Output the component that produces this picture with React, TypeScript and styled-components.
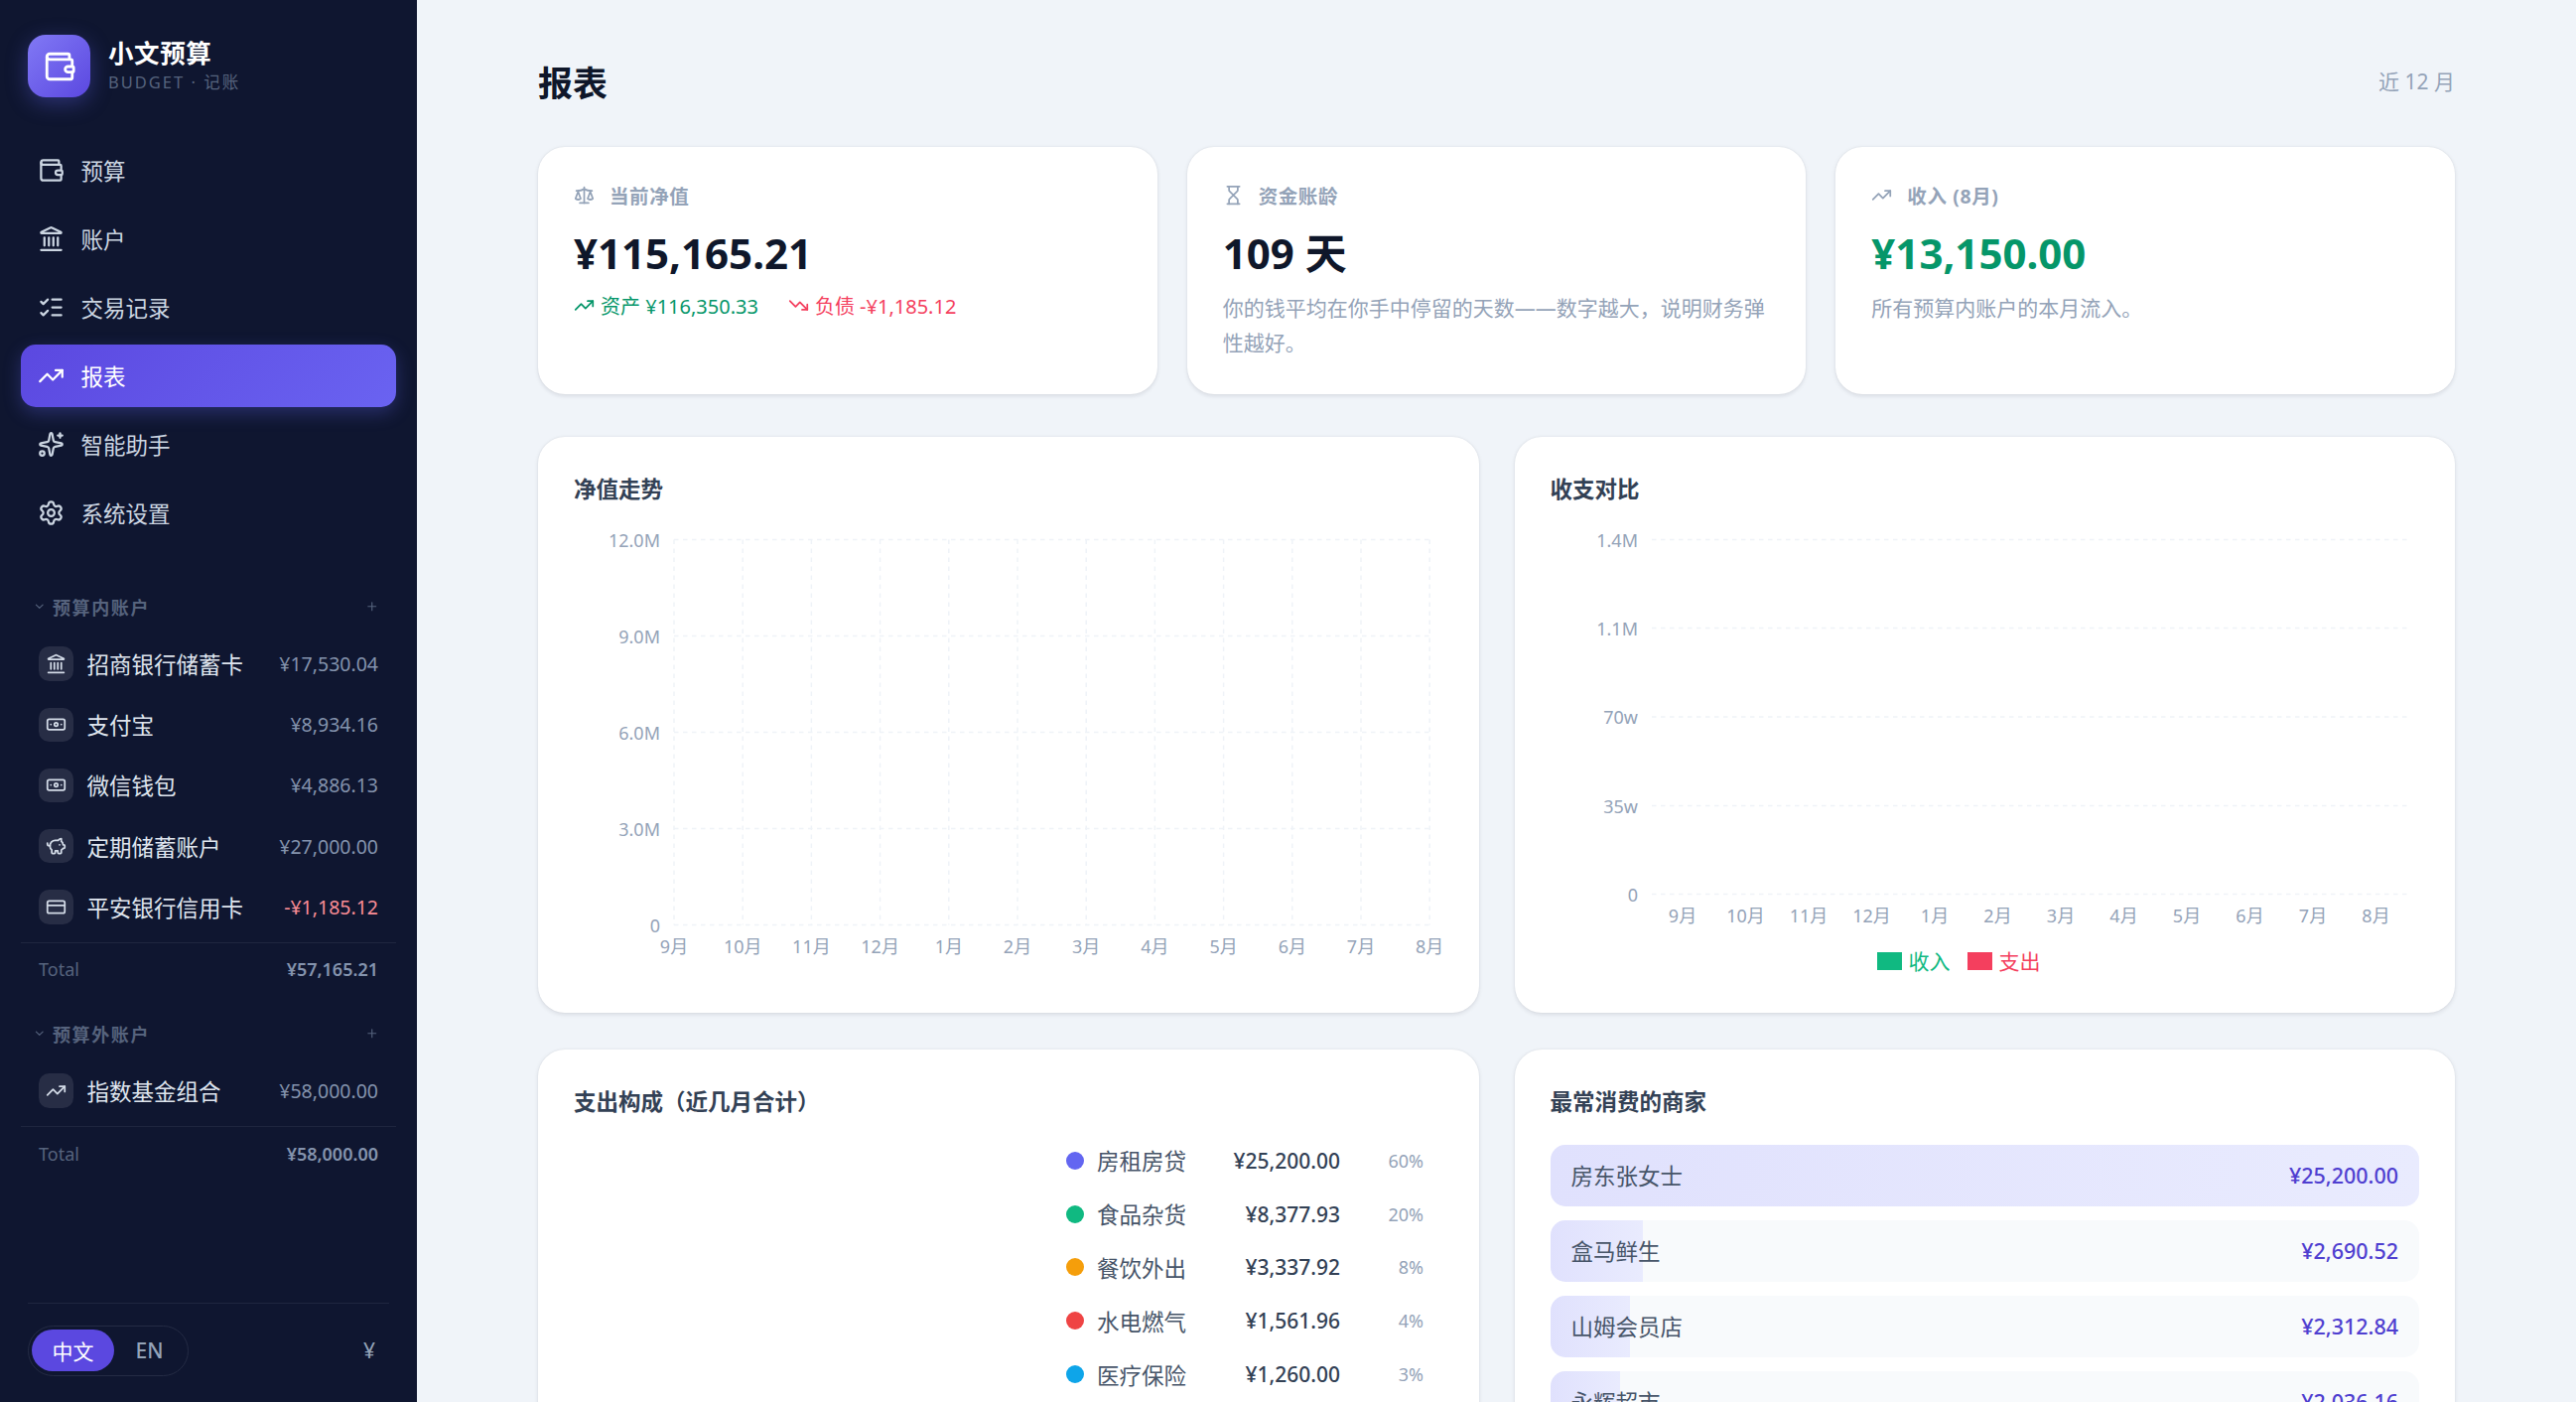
import React from "react"
import styled, { createGlobalStyle } from "styled-components"
import {
  Banknote,
  ChevronDown,
  CreditCard,
  Hourglass,
  Landmark,
  ListChecks,
  LucideIcon,
  PiggyBank,
  Plus,
  Scale,
  Settings,
  Sparkles,
  TrendingDown,
  TrendingUp,
  Wallet,
} from "lucide-react"

const GlobalStyle = createGlobalStyle`
  * { box-sizing: border-box; }
  html, body { margin: 0; height: 100%; }
  body {
    font-family: "Noto Sans", "Noto Sans CJK SC", sans-serif;
    background: #f0f4f9;
    overflow: hidden;
  }
`

const Shell = styled.div`
  display: flex;
  height: 100vh;
  overflow: hidden;
`

const Sidebar = styled.aside`
  flex: 0 0 420px;
  display: flex;
  flex-direction: column;
  background: #0f1630;
`

const Brand = styled.div`
  display: flex;
  align-items: center;
  gap: 18px;
  padding: 35px 28px 42px;
`

const BrandLogo = styled.div`
  width: 63px;
  height: 63px;
  border-radius: 18px;
  display: flex;
  align-items: center;
  justify-content: center;
  color: #fff;
  background: linear-gradient(135deg, #8179f5, #5b48e0);
  box-shadow: 0 6px 21px rgba(99, 102, 241, 0.35);
`

const BrandName = styled.div`
  font-size: 25.5px;
  line-height: 32px;
  font-weight: 700;
  letter-spacing: 0.6px;
  color: #fff;
  margin-top: -3px;
  margin-bottom: 3px;
`

const BrandSub = styled.div`
  font-size: 16.5px;
  line-height: 22px;
  letter-spacing: 2px;
  color: #56637d;
`

const Nav = styled.nav`
  display: flex;
  flex-direction: column;
  gap: 6px;
  padding: 0 21px;
`

const NavItem = styled.div<{ $active?: boolean }>`
  height: 63px;
  display: flex;
  align-items: center;
  gap: 17px;
  padding: 0 16.5px;
  border-radius: 15px;
  font-size: 22.5px;
  color: ${p => (p.$active ? "#fff" : "#cbd5e1")};
  background: ${p =>
    p.$active ? "linear-gradient(135deg, #5b48e0, #6a63f1)" : "transparent"};
  box-shadow: ${p =>
    p.$active ? "0 6px 18px rgba(99, 102, 241, 0.3)" : "none"};
`

const Group = styled.section`
  padding: 0 21px;
  margin-top: 23px;

  &:first-of-type {
    margin-top: 48px;
  }
`

const GroupHead = styled.div`
  height: 30px;
  display: flex;
  align-items: center;
  padding: 0 18px 0 12px;
  margin-bottom: 12px;
  color: #56637d;
`

const GroupTitle = styled.span`
  flex: 1;
  margin-left: 6.5px;
  font-size: 18px;
  font-weight: 700;
  letter-spacing: 1.6px;
`

const AccountRow = styled.div`
  height: 61.2px;
  display: flex;
  align-items: center;
  padding: 0 18px;
`

const AccountIcon = styled.div`
  width: 34.5px;
  height: 34.5px;
  flex: none;
  border-radius: 10.5px;
  display: flex;
  align-items: center;
  justify-content: center;
  background: #272d45;
  color: #d3dbe7;
`

const AccountName = styled.span`
  flex: 1;
  margin-left: 14px;
  font-size: 22.5px;
  color: #dfe5ee;
  white-space: nowrap;
`

const AccountAmount = styled.span<{ $negative?: boolean }>`
  font-size: 19.5px;
  color: ${p => (p.$negative ? "#fb8d96" : "#8493ad")};
`

const TotalRow = styled.div`
  margin-top: 5px;
  height: 54px;
  display: flex;
  align-items: center;
  justify-content: space-between;
  padding: 0 18px;
  border-top: 1.5px solid #1f263f;
  font-size: 18px;
`

const TotalLabel = styled.span`
  color: #56637d;
`

const TotalValue = styled.span`
  font-weight: 600;
  color: #8493ad;
`

const SideFooter = styled.div`
  margin: auto 28px 0;
  height: 100px;
  display: flex;
  align-items: center;
  justify-content: space-between;
  padding: 0 14px 5px 0;
  border-top: 1.5px solid #1f263f;
`

const LangSwitch = styled.div`
  width: 162px;
  height: 51px;
  display: flex;
  align-items: center;
  padding: 3px;
  border: 1.5px solid #242b44;
  border-radius: 26px;
`

const LangOption = styled.span<{ $active?: boolean }>`
  width: ${p => (p.$active ? "84px" : "72px")};
  height: 42px;
  display: flex;
  align-items: center;
  justify-content: center;
  border-radius: 21px;
  font-size: 21px;
  font-weight: ${p => (p.$active ? 400 : 500)};
  color: ${p => (p.$active ? "#fff" : "#94a3b8")};
  background: ${p => (p.$active ? "#5b48e0" : "transparent")};
`

const Currency = styled.span`
  font-size: 21px;
  color: #94a3b8;
`

const Main = styled.main`
  flex: 1;
  min-width: 0;
  overflow: hidden;
  padding-top: 54px;
`

const Content = styled.div`
  width: 1931px;
  margin: 0 auto;
`

const PageHead = styled.header`
  height: 54px;
  margin-bottom: 40px;
  display: flex;
  align-items: center;
  justify-content: space-between;
`

const PageTitle = styled.h1`
  margin: 0;
  font-size: 35px;
  font-weight: 700;
  color: #0f172a;
`

const PageRange = styled.span`
  font-size: 21px;
  color: #94a3b8;
`

const StatGrid = styled.div`
  display: grid;
  grid-template-columns: repeat(3, 1fr);
  gap: 30px;
  margin-bottom: 43.5px;
`

const Card = styled.div`
  background: #fff;
  border-radius: 27px;
  padding: 36px;
  box-shadow: 0 1.5px 4.5px rgba(15, 23, 42, 0.1), 0 0 1.5px rgba(15, 23, 42, 0.08);
`

const StatCard = styled(Card)`
  height: 248.5px;
  padding-top: 33px;
`

const StatLabel = styled.div`
  height: 30px;
  display: flex;
  align-items: center;
  gap: 15px;
  font-size: 19.5px;
  font-weight: 700;
  letter-spacing: 0.6px;
  color: #94a3b8;
`

const StatValue = styled.div<{ $color?: string }>`
  margin-top: 17px;
  height: 54px;
  line-height: 54px;
  font-size: 42px;
  font-weight: 700;
  color: ${p => p.$color || "#0f172a"};
`

const StatDesc = styled.div`
  margin-top: 11px;
  font-size: 21px;
  line-height: 35px;
  color: #94a3b8;
`

const SplitRow = styled.div`
  margin-top: 8px;
  height: 35px;
  display: flex;
  align-items: center;
  gap: 30px;
`

const Trend = styled.span<{ $color: string }>`
  display: inline-flex;
  align-items: center;
  gap: 6px;
  font-size: 20px;
  color: ${p => p.$color};
`

const PanelGrid = styled.div`
  display: grid;
  grid-template-columns: 1fr 1fr;
  gap: 36px;
`

const ChartCard = styled(Card)`
  height: 580px;
  padding-top: 34.5px;
`

const PanelTitle = styled.h2`
  margin: 0;
  height: 37px;
  line-height: 36px;
  font-size: 22.5px;
  font-weight: 700;
  color: #334155;
`

const ChartSvg = styled.svg`
  display: block;

  line {
    stroke: #eff3f8;
    stroke-width: 1.5;
    stroke-dasharray: 4.5 4.5;
  }

  text {
    fill: #94a3b8;
    font-size: 18px;
    font-family: "Noto Sans", "Noto Sans CJK SC", sans-serif;
    dominant-baseline: central;
  }
`

const ChartLegend = styled.div`
  display: flex;
  align-items: center;
  gap: 17px;
  margin-left: 329px;
  margin-top: 14px;
`

const LegendItem = styled.span<{ $color: string }>`
  display: inline-flex;
  align-items: center;
  gap: 7px;
  font-size: 21px;
  color: ${p => p.$color};

  &::before {
    content: "";
    width: 25px;
    height: 18px;
    margin-top: 3px;
    background: ${p => p.$color};
  }
`

const BottomGrid = styled(PanelGrid)`
  margin-top: 37px;
`

const TallCard = styled(Card)`
  height: 700px;
  padding-top: 34.5px;
`

const BreakdownList = styled.div`
  width: 360px;
  margin: 13.5px 0 0 496px;
`

const BreakdownRow = styled.div`
  height: 53.8px;
  display: grid;
  grid-template-columns: 18px 1fr auto 84px;
  align-items: center;
  column-gap: 0;
`

const Dot = styled.span<{ $color: string }>`
  width: 18px;
  height: 18px;
  border-radius: 50%;
  background: ${p => p.$color};
`

const BreakdownName = styled.span`
  margin-left: 13px;
  font-size: 22.5px;
  color: #475569;
`

const BreakdownAmount = styled.span`
  font-size: 21px;
  font-weight: 500;
  color: #334155;
`

const BreakdownPct = styled.span`
  text-align: right;
  font-size: 18px;
  color: #94a3b8;
`

const MerchantList = styled.div`
  display: flex;
  flex-direction: column;
  gap: 14px;
  margin-top: 24px;
`

const MerchantRow = styled.div`
  position: relative;
  height: 62px;
  display: flex;
  align-items: center;
  justify-content: space-between;
  padding: 0 21px;
  border-radius: 15px;
  overflow: hidden;
  background: #f8fafc;
`

const MerchantFill = styled.div`
  position: absolute;
  left: 0;
  top: 0;
  bottom: 0;
  background: linear-gradient(90deg, #e0e1fd, #e9ebfe);
`

const MerchantName = styled.span`
  position: relative;
  font-size: 22.5px;
  color: #475569;
`

const MerchantAmount = styled.span`
  position: relative;
  font-size: 21.5px;
  font-weight: 500;
  color: #4f3fd0;
`

const navItems: { icon: LucideIcon; label: string; active?: boolean }[] = [
  { icon: Wallet, label: "预算" },
  { icon: Landmark, label: "账户" },
  { icon: ListChecks, label: "交易记录" },
  { icon: TrendingUp, label: "报表", active: true },
  { icon: Sparkles, label: "智能助手" },
  { icon: Settings, label: "系统设置" },
]

const onBudget: { icon: LucideIcon; name: string; amount: string }[] = [
  { icon: Landmark, name: "招商银行储蓄卡", amount: "¥17,530.04" },
  { icon: Banknote, name: "支付宝", amount: "¥8,934.16" },
  { icon: Banknote, name: "微信钱包", amount: "¥4,886.13" },
  { icon: PiggyBank, name: "定期储蓄账户", amount: "¥27,000.00" },
  { icon: CreditCard, name: "平安银行信用卡", amount: "-¥1,185.12" },
]

const months = ["9月", "10月", "11月", "12月", "1月", "2月", "3月", "4月", "5月", "6月", "7月", "8月"]

const breakdown = [
  { color: "#6366f1", name: "房租房贷", amount: "¥25,200.00", pct: "60%" },
  { color: "#10b981", name: "食品杂货", amount: "¥8,377.93", pct: "20%" },
  { color: "#f59e0b", name: "餐饮外出", amount: "¥3,337.92", pct: "8%" },
  { color: "#ef4444", name: "水电燃气", amount: "¥1,561.96", pct: "4%" },
  { color: "#0ea5e9", name: "医疗保险", amount: "¥1,260.00", pct: "3%" },
]

const merchants = [
  { name: "房东张女士", amount: "¥25,200.00", value: 25200 },
  { name: "盒马鲜生", amount: "¥2,690.52", value: 2690.52 },
  { name: "山姆会员店", amount: "¥2,312.84", value: 2312.84 },
  { name: "永辉超市", amount: "¥2,036.16", value: 2036.16 },
]

const AccountLine: React.FC<{ icon: LucideIcon; name: string; amount: string }> = ({
  icon: Icon,
  name,
  amount,
}) => (
  <AccountRow>
    <AccountIcon>
      <Icon size={21} />
    </AccountIcon>
    <AccountName>{name}</AccountName>
    <AccountAmount $negative={amount.startsWith("-")}>{amount}</AccountAmount>
  </AccountRow>
)

const GroupHeader: React.FC<{ title: string }> = ({ title }) => (
  <GroupHead>
    <ChevronDown size={13.5} />
    <GroupTitle>{title}</GroupTitle>
    <Plus size={13.5} />
  </GroupHead>
)

const NetWorthChart: React.FC = () => {
  const ys = [
    { y: 31.5, label: "12.0M" },
    { y: 128.5, label: "9.0M" },
    { y: 225.5, label: "6.0M" },
    { y: 322.5, label: "3.0M" },
    { y: 419.5, label: "0" },
  ]
  return (
    <ChartSvg width={875} height={472}>
      {ys.map(t => (
        <g key={t.label}>
          <line x1={101} x2={862} y1={t.y} y2={t.y} />
          <text x={87} y={t.y} textAnchor="end">
            {t.label}
          </text>
        </g>
      ))}
      {months.map((m, i) => (
        <g key={m}>
          <line x1={101 + i * 69.2} x2={101 + i * 69.2} y1={31.5} y2={419.5} />
          <text x={101 + i * 69.2} y={440.5} textAnchor="middle">
            {m}
          </text>
        </g>
      ))}
    </ChartSvg>
  )
}

const CashFlowChart: React.FC = () => {
  const ys = [
    { y: 31.5, label: "1.4M" },
    { y: 120.5, label: "1.1M" },
    { y: 210, label: "70w" },
    { y: 299.5, label: "35w" },
    { y: 388.5, label: "0" },
  ]
  return (
    <ChartSvg width={875} height={426}>
      {ys.map(t => (
        <g key={t.label}>
          <line x1={102} x2={864} y1={t.y} y2={t.y} />
          <text x={88} y={t.y} textAnchor="end">
            {t.label}
          </text>
        </g>
      ))}
      {months.map((m, i) => (
        <text key={m} x={133 + i * 63.5} y={410} textAnchor="middle">
          {m}
        </text>
      ))}
    </ChartSvg>
  )
}

export default function App() {
  return (
    <Shell>
      <GlobalStyle />
      <Sidebar>
        <Brand>
          <BrandLogo>
            <Wallet size={34} />
          </BrandLogo>
          <div>
            <BrandName>小文预算</BrandName>
            <BrandSub>BUDGET · 记账</BrandSub>
          </div>
        </Brand>
        <Nav>
          {navItems.map(({ icon: Icon, label, active }) => (
            <NavItem key={label} $active={active}>
              <Icon size={27} />
              {label}
            </NavItem>
          ))}
        </Nav>
        <Group>
          <GroupHeader title="预算内账户" />
          {onBudget.map(a => (
            <AccountLine key={a.name} {...a} />
          ))}
          <TotalRow>
            <TotalLabel>Total</TotalLabel>
            <TotalValue>¥57,165.21</TotalValue>
          </TotalRow>
        </Group>
        <Group>
          <GroupHeader title="预算外账户" />
          <AccountLine icon={TrendingUp} name="指数基金组合" amount="¥58,000.00" />
          <TotalRow>
            <TotalLabel>Total</TotalLabel>
            <TotalValue>¥58,000.00</TotalValue>
          </TotalRow>
        </Group>
        <SideFooter>
          <LangSwitch>
            <LangOption $active>中文</LangOption>
            <LangOption>EN</LangOption>
          </LangSwitch>
          <Currency>¥</Currency>
        </SideFooter>
      </Sidebar>
      <Main>
        <Content>
          <PageHead>
            <PageTitle>报表</PageTitle>
            <PageRange>近 12 月</PageRange>
          </PageHead>
          <StatGrid>
            <StatCard>
              <StatLabel>
                <Scale size={21} />
                当前净值
              </StatLabel>
              <StatValue>¥115,165.21</StatValue>
              <SplitRow>
                <Trend $color="#059669">
                  <TrendingUp size={21} />
                  资产 ¥116,350.33
                </Trend>
                <Trend $color="#f43f5e">
                  <TrendingDown size={21} />
                  负债 -¥1,185.12
                </Trend>
              </SplitRow>
            </StatCard>
            <StatCard>
              <StatLabel>
                <Hourglass size={21} />
                资金账龄
              </StatLabel>
              <StatValue>109 天</StatValue>
              <StatDesc>你的钱平均在你手中停留的天数——数字越大，说明财务弹性越好。</StatDesc>
            </StatCard>
            <StatCard>
              <StatLabel>
                <TrendingUp size={21} />
                收入 (8月)
              </StatLabel>
              <StatValue $color="#059669">¥13,150.00</StatValue>
              <StatDesc>所有预算内账户的本月流入。</StatDesc>
            </StatCard>
          </StatGrid>
          <PanelGrid>
            <ChartCard>
              <PanelTitle>净值走势</PanelTitle>
              <NetWorthChart />
            </ChartCard>
            <ChartCard>
              <PanelTitle>收支对比</PanelTitle>
              <CashFlowChart />
              <ChartLegend>
                <LegendItem $color="#10b981">收入</LegendItem>
                <LegendItem $color="#f43f5e">支出</LegendItem>
              </ChartLegend>
            </ChartCard>
          </PanelGrid>
          <BottomGrid>
            <TallCard>
              <PanelTitle>支出构成（近几月合计）</PanelTitle>
              <BreakdownList>
                {breakdown.map(b => (
                  <BreakdownRow key={b.name}>
                    <Dot $color={b.color} />
                    <BreakdownName>{b.name}</BreakdownName>
                    <BreakdownAmount>{b.amount}</BreakdownAmount>
                    <BreakdownPct>{b.pct}</BreakdownPct>
                  </BreakdownRow>
                ))}
              </BreakdownList>
            </TallCard>
            <TallCard>
              <PanelTitle>最常消费的商家</PanelTitle>
              <MerchantList>
                {merchants.map(m => (
                  <MerchantRow key={m.name}>
                    <MerchantFill style={{ width: `${(m.value / 25200) * 100}%` }} />
                    <MerchantName>{m.name}</MerchantName>
                    <MerchantAmount>{m.amount}</MerchantAmount>
                  </MerchantRow>
                ))}
              </MerchantList>
            </TallCard>
          </BottomGrid>
        </Content>
      </Main>
    </Shell>
  )
}
